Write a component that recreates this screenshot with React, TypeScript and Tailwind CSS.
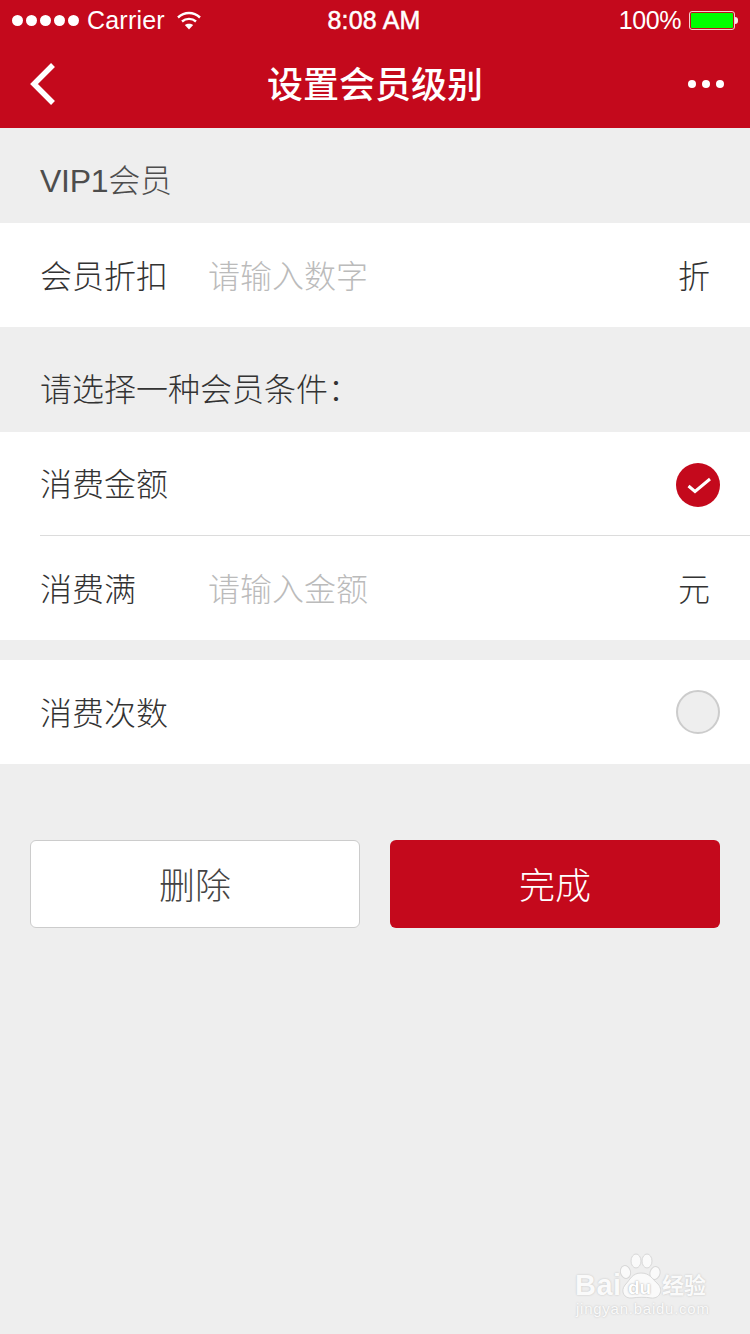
const cjk = "font-['Noto_Sans_CJK_SC','Liberation_Sans',sans-serif]";

const StatusBar = () => (
  <div className="flex h-10 items-center justify-between pl-3 pr-3 text-white font-['Liberation_Sans',sans-serif]">
    <div className="flex w-[210px] items-center">
      <div className="flex gap-[3px]">
        <span className="h-[11px] w-[11px] rounded-full bg-white" />
        <span className="h-[11px] w-[11px] rounded-full bg-white" />
        <span className="h-[11px] w-[11px] rounded-full bg-white" />
        <span className="h-[11px] w-[11px] rounded-full bg-white" />
        <span className="h-[11px] w-[11px] rounded-full bg-white" />
      </div>
      <span className="ml-2 text-[25px] leading-none tracking-[0.2px]">Carrier</span>
      <svg className="ml-[11px]" width="26" height="20" viewBox="0 0 26 20" fill="none" stroke="white" strokeWidth="2.4">
        <path d="M2 7.5C8.5 1.5 17.5 1.5 24 7.5" />
        <path d="M6 11.5C10 8 16 8 20 11.5" />
        <path d="M13 19.5L8.8 15C11.2 13.2 14.8 13.2 17.2 15Z" fill="white" stroke="none" />
      </svg>
    </div>
    <span className="-ml-[2px] text-[25px] leading-none tracking-[0.2px] [-webkit-text-stroke:0.5px_white]">8:08 AM</span>
    <div className="flex w-[210px] items-center justify-end">
      <span className="text-[25px] leading-none tracking-[-0.4px]">100%</span>
      <div className="ml-2 h-[19px] w-[46px] rounded-[3px] border border-white/80 p-px">
        <div className="h-full w-full rounded-[1px] bg-[#00ff00]" />
      </div>
      <div className="h-[7px] w-[3px] rounded-r-full bg-white/90" />
    </div>
  </div>
);

const NavBar = () => (
  <div className="relative flex h-[88px] items-center justify-center pb-[5px]">
    <svg className="absolute left-[28px] top-[22px]" width="30" height="44" viewBox="0 0 30 44" fill="none" stroke="white" strokeWidth="5.5">
      <path d="M25 3L6 22L25 41" />
    </svg>
    <h1 className={`${cjk} text-[36px] font-medium leading-none text-white`}>设置会员级别</h1>
    <div className="absolute right-[26px] top-10 flex gap-[6px]">
      <span className="h-2 w-2 rounded-full bg-white" />
      <span className="h-2 w-2 rounded-full bg-white" />
      <span className="h-2 w-2 rounded-full bg-white" />
    </div>
  </div>
);

const Row = ({ label, placeholder, unit, tall = true, children }: { label: string; placeholder?: string; unit?: string; tall?: boolean; children?: React.ReactNode }) => (
  <div className={`flex items-center pl-10 pr-[30px] ${tall ? "h-[104px]" : "h-[103px]"}`}>
    <span className="-mt-[3px] w-[168px] text-[32px] font-light leading-none text-[#333]">{label}</span>
    {placeholder && <span className="-mt-[3px] text-[32px] font-light leading-none text-[#bbbbbb]">{placeholder}</span>}
    {unit && <span className="-mt-[3px] ml-auto mr-[10px] text-[32px] font-light leading-none text-[#333]">{unit}</span>}
    {children && <div className="ml-auto">{children}</div>}
  </div>
);

const Checked = () => (
  <div className="mt-[3px] flex h-11 w-11 items-center justify-center rounded-full bg-[#c4091c]">
    <svg width="26" height="20" viewBox="0 0 26 20" fill="none" stroke="white" strokeWidth="3">
      <path d="M3.5 11L10 16.5L25 4" />
    </svg>
  </div>
);

const Paw = () => (
  <svg className="absolute left-[45px] top-[-2px]" width="46" height="50" viewBox="0 0 46 50">
    <g fill="#fafafa" stroke="#d8d8d8" strokeWidth="1">
      <ellipse cx="5.5" cy="20" rx="5" ry="6.5" transform="rotate(-15 5.5 20)" />
      <ellipse cx="16" cy="9" rx="5" ry="7" />
      <ellipse cx="27" cy="9" rx="5" ry="7" />
      <ellipse cx="35" cy="21" rx="5" ry="6.5" transform="rotate(15 35 21)" />
      <path d="M21 21C30 21 32 27 38 32C44 39 39 47 31 46C26 45 18 45 12 46C4 47 0 39 5 33C10 28 12 21 21 21Z" />
    </g>
  </svg>
);

const Watermark = () => (
  <div className="relative mb-[18px] mr-[40px] mt-auto h-[62px] w-[135px] self-end whitespace-nowrap [text-shadow:0_0_2px_#bdbdbd]">
    <Paw />
    <span className="absolute left-0 top-[17px] font-['Liberation_Sans',sans-serif] text-[29px] font-bold leading-none tracking-[0.5px] text-[#fafafa]">Bai</span>
    <span className="absolute left-[53px] top-[24px] font-['Liberation_Sans',sans-serif] text-[19px] font-bold leading-none text-[#ffffff] [text-shadow:0_0_2px_#999999]">du</span>
    <span className="absolute left-[87px] top-[18px] text-[22px] font-bold leading-none text-[#fafafa]">经验</span>
    <span className="absolute bottom-0 left-[1px] font-['Liberation_Sans',sans-serif] text-[15px] leading-none tracking-[0.75px] text-[#fafafa]">jingyan.baidu.com</span>
  </div>
);

export default function App() {
  return (
    <div className={`${cjk} flex min-h-[1334px] w-[750px] flex-col bg-[#eeeeee]`}>
      <div className="bg-[#c4091c]">
        <StatusBar />
        <NavBar />
      </div>

      <div className="flex h-[95px] items-center pl-10 pt-[10px] text-[32px] font-light leading-none tracking-[-0.3px] text-[#4d4d4d]">
        <span className="font-['Liberation_Sans','Noto_Sans_CJK_SC',sans-serif]">VIP1会员</span>
      </div>
      <div className="bg-white">
        <Row label="会员折扣" placeholder="请输入数字" unit="折" />
      </div>

      <div className="flex h-[105px] items-center pl-10 pt-[14px] text-[32px] font-light leading-none text-[#333]">请选择一种会员条件：</div>
      <div className="bg-white">
        <Row label="消费金额" tall={false}><Checked /></Row>
        <div className="ml-10 h-px bg-[#dcdcdc]" />
        <Row label="消费满" placeholder="请输入金额" unit="元" />
      </div>

      <div className="mt-5 bg-white">
        <Row label="消费次数">
          <div className="h-11 w-11 rounded-full border-2 border-[#cccccc] bg-[#eeeeee]" />
        </Row>
      </div>

      <div className="mt-[76px] flex gap-[30px] px-[30px]">
        <button className="h-[88px] w-[330px] rounded-[6px] border border-[#cccccc] bg-white pb-[2px] text-[36px] font-light text-[#444]">删除</button>
        <button className="h-[88px] w-[330px] rounded-[6px] bg-[#c4091c] pb-[2px] text-[36px] font-light text-white">完成</button>
      </div>

      <Watermark />
    </div>
  );
}
